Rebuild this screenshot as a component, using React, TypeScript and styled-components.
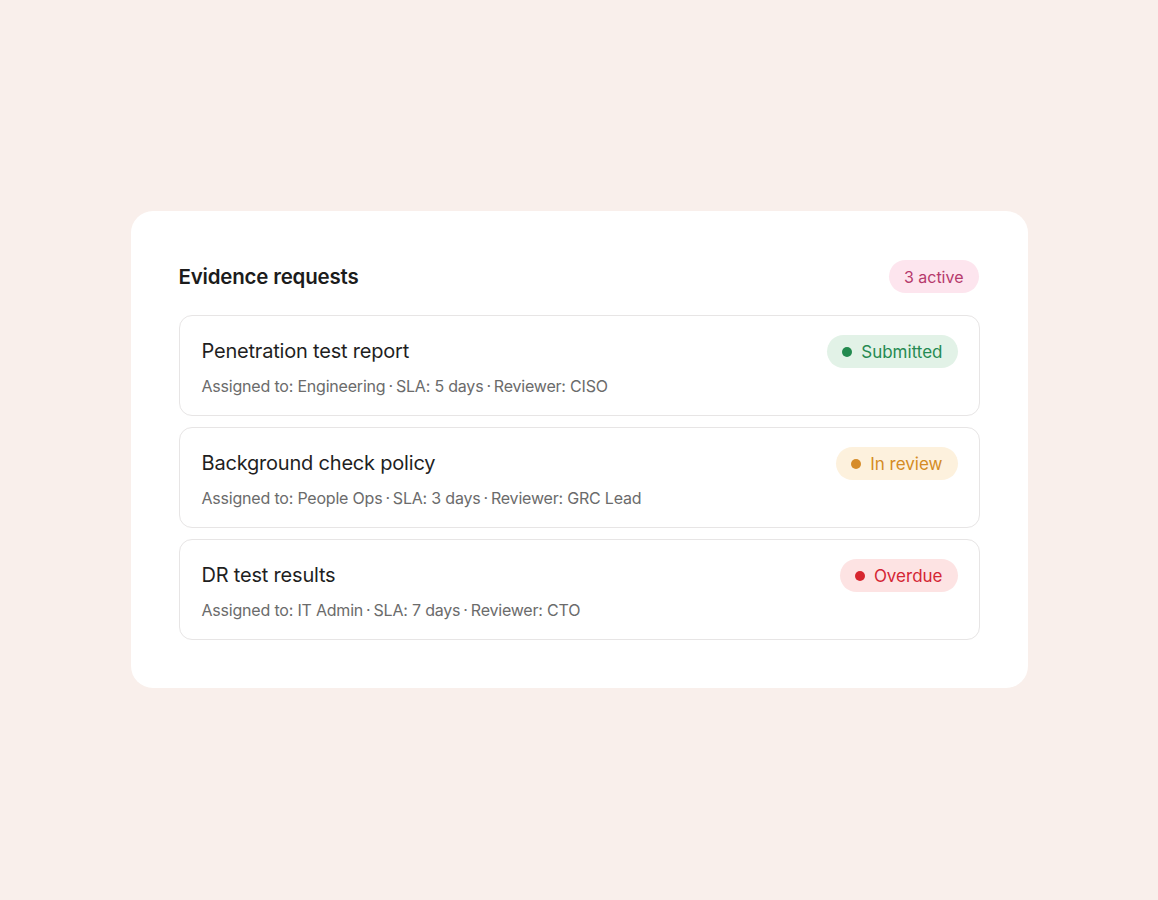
import React from 'react';
import styled, { createGlobalStyle } from 'styled-components';

const GlobalStyle = createGlobalStyle`
  html, body {
    margin: 0;
    padding: 0;
    background: #f9efeb;
  }
  body {
    font-family: Inter, 'Noto Sans', sans-serif;
    -webkit-font-smoothing: antialiased;
  }
`;

const STATUS_COLORS = {
  submitted: { bg: '#e2f2e7', fg: '#268a52', dot: '#238a4f' },
  review: { bg: '#fdf1dd', fg: '#d48b24', dot: '#d68c2a' },
  overdue: { bg: '#fde3e3', fg: '#d42634', dot: '#d7262f' },
};

type Status = keyof typeof STATUS_COLORS;

const Page = styled.div`
  min-height: 900px;
  display: flex;
  justify-content: center;
  padding-top: 211px;
  box-sizing: border-box;
`;

const Card = styled.section`
  width: 897px;
  box-sizing: border-box;
  background: #ffffff;
  border-radius: 22px;
  padding: 49px 48px 48px;
  align-self: flex-start;
`;

const Header = styled.div`
  display: flex;
  align-items: center;
  justify-content: space-between;
  margin-bottom: 22px;
`;

const Title = styled.h2`
  margin: 0;
  font-size: 20.5px;
  font-weight: 600;
  color: #1c1c1c;
  letter-spacing: -0.2px;
`;

const CountBadge = styled.span`
  height: 33px;
  display: inline-flex;
  align-items: center;
  padding: 0 15px;
  border-radius: 17px;
  background: #fde5ee;
  color: #b63a6c;
  font-size: 16px;
  margin-right: 1px;
`;

const List = styled.div`
  display: flex;
  flex-direction: column;
  gap: 11px;
`;

const Row = styled.div`
  height: 101px;
  box-sizing: border-box;
  border: 1px solid #e7e5e5;
  border-radius: 13px;
  padding: 19px 21px 0 22px;
  display: flex;
  justify-content: space-between;
  align-items: flex-start;
`;

const RowText = styled.div`
  display: flex;
  flex-direction: column;
  gap: 12px;
  padding-top: 4px;
`;

const RowTitle = styled.div`
  font-size: 20px;
  line-height: 25px;
  color: #1f1f1f;
  letter-spacing: -0.2px;
`;

const Meta = styled.div`
  font-size: 16px;
  color: #6b6b6b;
  letter-spacing: -0.2px;
`;

const Sep = styled.span`
  margin: 0 3px;
`;

const Pill = styled.span<{ $status: Status }>`
  height: 33px;
  display: inline-flex;
  align-items: center;
  gap: 9px;
  padding: 0 15px;
  border-radius: 17px;
  background: ${(p) => STATUS_COLORS[p.$status].bg};
  color: ${(p) => STATUS_COLORS[p.$status].fg};
  font-size: 17px;
`;

const Dot = styled.span<{ $status: Status }>`
  width: 10px;
  height: 10px;
  border-radius: 50%;
  background: ${(p) => STATUS_COLORS[p.$status].dot};
`;

const requests: {
  id: number;
  title: string;
  assigned: string;
  sla: string;
  reviewer: string;
  status: Status;
  label: string;
}[] = [
  { id: 1, title: 'Penetration test report', assigned: 'Engineering', sla: '5 days', reviewer: 'CISO', status: 'submitted', label: 'Submitted' },
  { id: 2, title: 'Background check policy', assigned: 'People Ops', sla: '3 days', reviewer: 'GRC Lead', status: 'review', label: 'In review' },
  { id: 3, title: 'DR test results', assigned: 'IT Admin', sla: '7 days', reviewer: 'CTO', status: 'overdue', label: 'Overdue' },
];

export default function App() {
  return (
    <>
      <GlobalStyle />
      <Page>
        <Card>
          <Header>
            <Title>Evidence requests</Title>
            <CountBadge>3 active</CountBadge>
          </Header>
          <List>
            {requests.map((r) => (
              <Row key={r.id}>
                <RowText>
                  <RowTitle>{r.title}</RowTitle>
                  <Meta>
                    Assigned to: {r.assigned}
                    <Sep>·</Sep>
                    SLA: {r.sla}
                    <Sep>·</Sep>
                    Reviewer: {r.reviewer}
                  </Meta>
                </RowText>
                <Pill $status={r.status}>
                  <Dot $status={r.status} />
                  {r.label}
                </Pill>
              </Row>
            ))}
          </List>
        </Card>
      </Page>
    </>
  );
}
